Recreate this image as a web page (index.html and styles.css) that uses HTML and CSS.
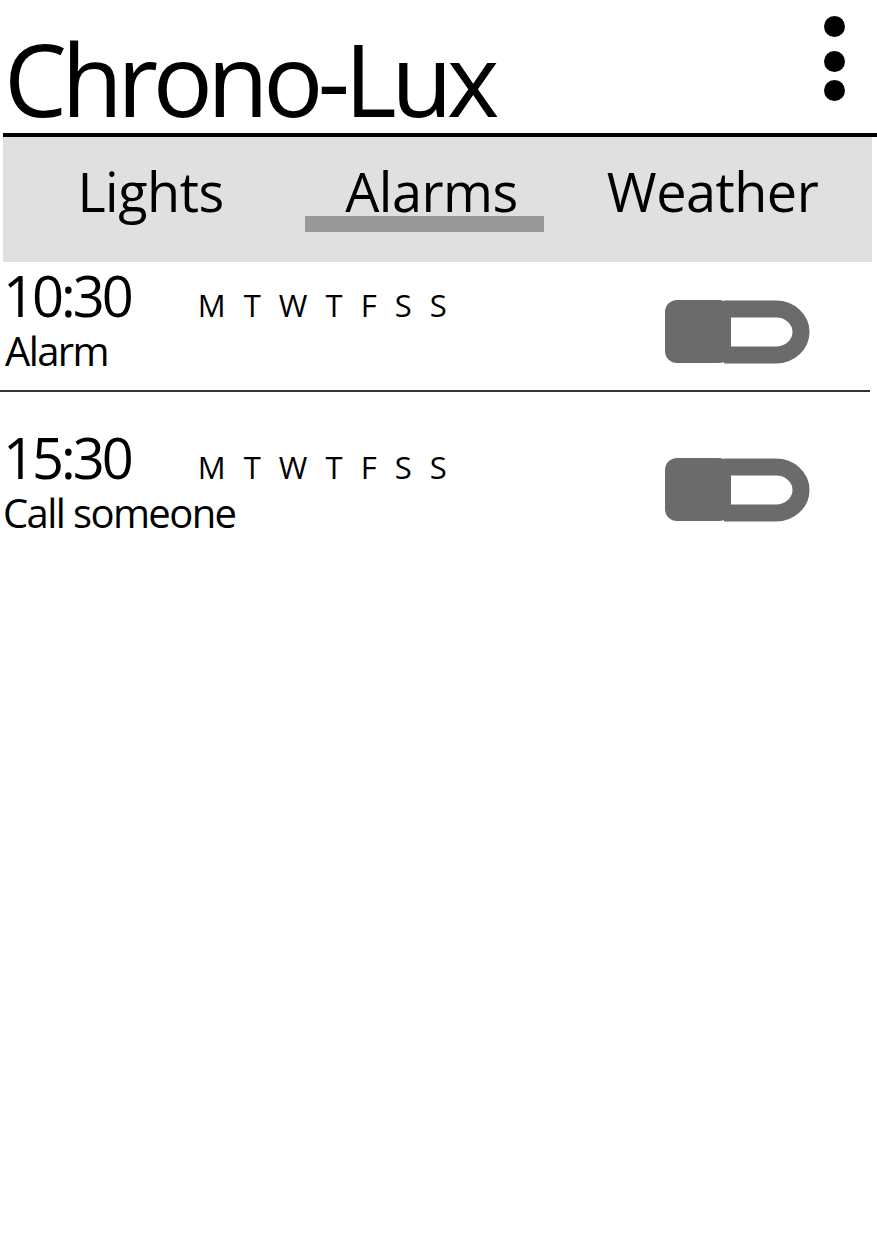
FILE: index.html
```html
<!DOCTYPE html>
<html>
<head>
<meta charset="utf-8">
<link rel="stylesheet" href="styles.css">
</head>
<body>
<div class="app">
  <header class="header">
    <h1 class="title">Chrono-Lux</h1>
    <div class="menu">
      <span class="dot"></span>
      <span class="dot"></span>
      <span class="dot"></span>
    </div>
  </header>
  <nav class="tabs">
    <div class="tab">Lights</div>
    <div class="tab active">Alarms</div>
    <div class="tab">Weather</div>
  </nav>
  <div class="list">
    <div class="alarm">
      <div class="info">
        <div class="top">
          <span class="time">10:30</span>
          <span class="days">M T W T F S S</span>
        </div>
        <div class="label">Alarm</div>
      </div>
      <svg class="toggle" width="146" height="66" viewBox="0 0 146 66">
        <path d="M60 10 H112 a25 23 0 0 1 0 46 H60" fill="none" stroke="#6b6b6b" stroke-width="17" stroke-linejoin="round"/>
        <rect x="1" y="1" width="66" height="63" rx="12" fill="#6b6b6b"/>
      </svg>
    </div>
    <div class="alarm second">
      <div class="info">
        <div class="top">
          <span class="time">15:30</span>
          <span class="days">M T W T F S S</span>
        </div>
        <div class="label">Call someone</div>
      </div>
      <svg class="toggle" width="146" height="66" viewBox="0 0 146 66">
        <path d="M60 10 H112 a25 23 0 0 1 0 46 H60" fill="none" stroke="#6b6b6b" stroke-width="17" stroke-linejoin="round"/>
        <rect x="1" y="1" width="66" height="63" rx="12" fill="#6b6b6b"/>
      </svg>
    </div>
  </div>
</div>
</body>
</html>
```

FILE: styles.css
```css
* { box-sizing: border-box; }
html, body {
  margin: 0;
  padding: 0;
  background: #fff;
}
body {
  font-family: "Open Sans", "Noto Sans", sans-serif;
  color: #000;
  width: 877px;
  height: 1240px;
  overflow: hidden;
}
.header {
  display: flex;
  justify-content: space-between;
  align-items: flex-start;
  height: 137px;
  margin-left: 3px;
  border-bottom: 4px solid #000;
}
.title {
  margin: 0;
  padding-left: 1px;
  font-weight: 400;
  font-size: 100px;
  letter-spacing: -5.5px;
  line-height: 1;
  margin-top: 28px;
}
.menu {
  display: flex;
  flex-direction: column;
  gap: 8px;
  padding-top: 16px;
  margin-right: 32px;
}
.dot {
  display: block;
  width: 21px;
  height: 21px;
  border-radius: 50%;
  background: #000;
}
.dot:first-child { margin-bottom: 6px; }
.tabs {
  display: flex;
  height: 125px;
  margin-left: 3px;
  margin-right: 5px;
  padding-left: 7px;
  padding-right: 19px;
  background: #e0e0e0;
}
.tab {
  flex: 1;
  text-align: center;
  font-size: 54px;
  letter-spacing: -0.5px;
  line-height: 1;
  padding-top: 27px;
}
.tab.active {
  position: relative;
}
.tab.active::after {
  content: "";
  position: absolute;
  left: 14px;
  right: 28px;
  top: 79px;
  height: 16px;
  background: #999;
}
.alarm {
  display: flex;
  justify-content: space-between;
  align-items: flex-start;
  height: 130px;
  margin-right: 7px;
  border-bottom: 2px solid #333;
}
.alarm.second { border-bottom: none; }
.info {
  padding-left: 3px;
}
.second .info { padding-top: 32px; }
.second .toggle { margin-top: 65px; }
.top {
  display: flex;
  align-items: baseline;
  gap: 67px;
}
.time {
  font-size: 56px;
  letter-spacing: -3px;
  line-height: 1;
  margin-top: 5px;
}
.days {
  font-size: 31px;
  line-height: 1;
  word-spacing: 10px;
}
.label {
  font-size: 40px;
  letter-spacing: -1.6px;
  line-height: 1;
  margin-top: 8px;
  margin-left: 2px;
}
.second .label { margin-left: 0; }
.toggle {
  display: block;
  margin-top: 37px;
  margin-right: 60px;
}
```
